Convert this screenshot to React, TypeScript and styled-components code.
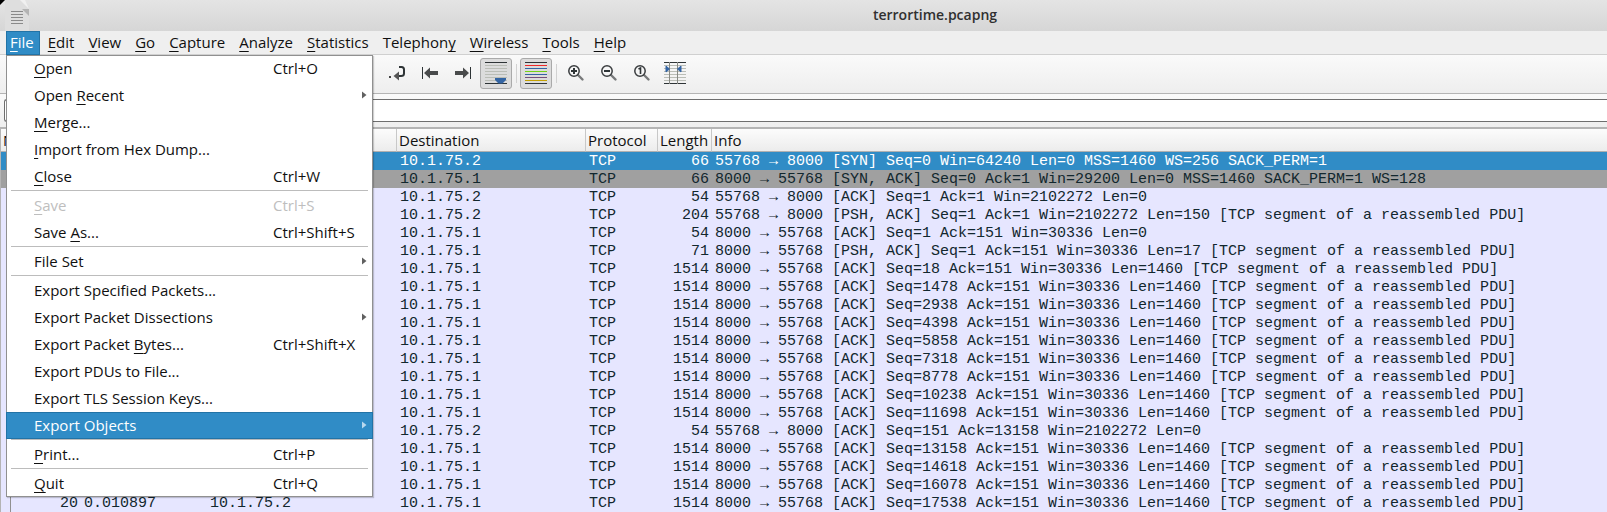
import React from "react";
import styled, { createGlobalStyle, css } from "styled-components";

const ui = `"Open Sans", "Noto Sans", sans-serif`;
const mono = `"Liberation Mono", monospace`;

const Global = createGlobalStyle`
  *, *::before, *::after { box-sizing: border-box; }
  body { margin: 0; background: #e6e6ff; overflow: hidden; }
  button, input { font: inherit; color: inherit; }
`;

const Window = styled.div`
  display: flex;
  flex-direction: column;
  min-height: 100vh;
  background: #efefef;
  color: #101010;
  font: 15px/22px ${ui};
`;

const TitleBar = styled.header`
  position: relative;
  display: flex;
  align-items: center;
  justify-content: center;
  height: 31px;
  padding: 0 0 2px 263px;
  background: linear-gradient(#e4e4e4, #d6d6d6);
  color: #303030;
`;

const Title = styled.h1`
  margin: 0;
  font: 600 14px/20px ${ui};
`;

const DocumentIcon = styled.svg`
  position: absolute;
  left: 0;
  top: 0;
`;

const MenuBar = styled.nav`
  position: relative;
  z-index: 2;
  display: flex;
  height: 24px;
  padding: 0 6px;
  border-bottom: 1px solid #d0d0d0;
`;

const MenuSlot = styled.div`
  position: relative;
`;

const MenuButton = styled.button<{ $open?: boolean }>`
  height: 24px;
  padding: 0 6px 2px 4px;
  margin-right: 4px;
  border: 0;
  background: none;
  line-height: 22px;
  white-space: nowrap;
  ${(p) =>
    p.$open &&
    css`
      background: #308cc6;
      box-shadow: inset 0 0 0 1px #2273a6;
      color: #fff;
    `}
`;

const Mnemonic = styled.span`
  text-decoration: underline;
  text-decoration-thickness: 1px;
  text-underline-offset: 3px;
  text-decoration-skip-ink: none;
`;

const Menu = styled.ul`
  position: absolute;
  left: 0;
  top: 24px;
  width: 367px;
  margin: 0;
  padding: 0;
  list-style: none;
  background: #fff;
  box-shadow: inset 0 0 0 1px #909090, 1px 1px 1px #00000030;
`;

const MenuDivider = styled.li`
  height: 2px;
  margin: 0 5px;
  border-top: 1px solid #bcbcbc;
`;

const MenuItem = styled.button<{ $active?: boolean }>`
  display: grid;
  grid-template-columns: 239px 1fr 5px;
  align-items: center;
  width: 100%;
  height: 27px;
  padding: 0 6px 2px 28px;
  border: 0;
  background: none;
  text-align: left;
  white-space: nowrap;
  &:disabled { color: #bebebe; }
  ${(p) =>
    p.$active &&
    css`
      background: #308cc6;
      box-shadow: inset 0 0 0 1px #2273a6;
      color: #fff;
    `}
`;

const SubmenuArrow = styled.svg`
  grid-column: 3;
`;

const ToolBar = styled.div`
  display: flex;
  align-items: center;
  height: 39px;
  padding: 0 0 2px 381px;
  border-bottom: 1px solid #b4b4b4;
  background: linear-gradient(#fafafa, #eeeeee);
`;

const Tool = styled.button<{ $pressed?: boolean }>`
  display: grid;
  place-items: center;
  width: 32px;
  height: 31px;
  margin-right: 1px;
  padding: 0;
  border: 1px solid ${(p) => (p.$pressed ? "#aaaaaa" : "transparent")};
  border-radius: 3px;
  background: ${(p) => (p.$pressed ? "#dcdcdc" : "none")};
`;

const ToolDivider = styled.span`
  width: 1px;
  height: 19px;
  margin: 0 3px;
  background: #d2d2d2;
`;

const FilterBar = styled.div`
  display: flex;
  height: 33px;
  padding: 5px 0 5px 4px;
  background: linear-gradient(#fafafa, #eeeeee);
`;

const FilterInput = styled.input`
  flex: 1;
  min-width: 0;
  padding: 0 6px;
  border: 1px solid #6e6e6e;
  border-right: 0;
  border-radius: 3px 0 0 3px;
  background: #fff;
  outline: 0;
`;

const PacketPane = styled.main`
  flex: 1;
  border-top: 2px solid #b4b4b4;
  border-left: 1px solid #b4b4b4;
  background: #e6e6ff;
`;

const PacketTable = styled.table`
  width: 100%;
  border-collapse: separate;
  border-spacing: 0;
  table-layout: fixed;
`;

const HeadCell = styled.th`
  height: 23px;
  padding: 0 0 0 2px;
  border-right: 1px solid #c8c8c8;
  border-bottom: 1px solid #b0b0b0;
  background: linear-gradient(#fcfcfc, #ececec);
  font-weight: normal;
  line-height: 22px;
  text-align: left;
  white-space: nowrap;
  &:last-child { border-right: 0; }
`;

type Tone = "selected" | "syn" | "tcp";
const tones = {
  selected: css`background: #308cc6; color: #fff;`,
  syn: css`background: #a0a0a0; color: #12272e;`,
  tcp: css`background: #e6e6ff; color: #12272e;`,
};

const PacketRow = styled.tr<{ $tone: Tone }>`
  ${(p) => tones[p.$tone]}
`;

const Cell = styled.td<{ $right?: boolean }>`
  height: 18px;
  padding: 2px 3px 0;
  overflow: hidden;
  font: 15px/16px ${mono};
  text-align: ${(p) => (p.$right ? "right" : "left")};
  white-space: pre;
`;

const NumberCell = styled(Cell)`
  background: linear-gradient(#909090, #909090) 9px 0 / 1px 100% no-repeat;
`;

type Entry = { label: string; key?: string; sub?: boolean; off?: boolean; active?: boolean } | null;

const fileMenu: Entry[] = [
  { label: "&Open", key: "Ctrl+O" },
  { label: "Open &Recent", sub: true },
  { label: "&Merge..." },
  { label: "&Import from Hex Dump..." },
  { label: "&Close", key: "Ctrl+W" },
  null,
  { label: "&Save", key: "Ctrl+S", off: true },
  { label: "Save &As...", key: "Ctrl+Shift+S" },
  null,
  { label: "File Set", sub: true },
  null,
  { label: "Export Specified Packets..." },
  { label: "Export Packet Dissections", sub: true },
  { label: "Export Packet &Bytes...", key: "Ctrl+Shift+X" },
  { label: "Export PDUs to File..." },
  { label: "Export TLS Session Keys..." },
  { label: "Export Objects", sub: true, active: true },
  null,
  { label: "&Print...", key: "Ctrl+P" },
  null,
  { label: "&Quit", key: "Ctrl+Q" },
];

const menus = ["&File", "&Edit", "&View", "&Go", "&Capture", "&Analyze", "&Statistics", "Telephon&y", "&Wireless", "&Tools", "&Help"];

const A = "10.1.75.1";
const B = "10.1.75.2";
const up = "8000 → 55768 ";
const down = "55768 → 8000 ";
const pdu = " [TCP segment of a reassembled PDU]";

type Packet = { no?: number; time?: string; src?: string; dst: string; length: number; info: string };

const packet = (dst: string, length: number, info: string): Packet => ({ dst, length, info });
const segment = (seq: number) => packet(A, 1514, `${up}[ACK] Seq=${seq} Ack=151 Win=30336 Len=1460${pdu}`);

const packets: Packet[] = [
  packet(B, 66, `${down}[SYN] Seq=0 Win=64240 Len=0 MSS=1460 WS=256 SACK_PERM=1`),
  packet(A, 66, `${up}[SYN, ACK] Seq=0 Ack=1 Win=29200 Len=0 MSS=1460 SACK_PERM=1 WS=128`),
  packet(B, 54, `${down}[ACK] Seq=1 Ack=1 Win=2102272 Len=0`),
  packet(B, 204, `${down}[PSH, ACK] Seq=1 Ack=1 Win=2102272 Len=150${pdu}`),
  packet(A, 54, `${up}[ACK] Seq=1 Ack=151 Win=30336 Len=0`),
  packet(A, 71, `${up}[PSH, ACK] Seq=1 Ack=151 Win=30336 Len=17${pdu}`),
  segment(18),
  segment(1478),
  segment(2938),
  segment(4398),
  segment(5858),
  segment(7318),
  segment(8778),
  segment(10238),
  segment(11698),
  packet(B, 54, `${down}[ACK] Seq=151 Ack=13158 Win=2102272 Len=0`),
  segment(13158),
  segment(14618),
  segment(16078),
  { ...segment(17538), no: 20, time: "0.010897", src: B },
];

function Label({ text }: { text: string }) {
  const i = text.indexOf("&");
  if (i < 0) return <span>{text}</span>;
  return (
    <span>
      {text.slice(0, i)}
      <Mnemonic>{text[i + 1]}</Mnemonic>
      {text.slice(i + 2)}
    </span>
  );
}

function FileMenu() {
  return (
    <Menu>
      {fileMenu.map((e, i) =>
        e === null ? (
          <MenuDivider key={i} />
        ) : (
          <li key={i}>
            <MenuItem $active={e.active} disabled={e.off}>
              <Label text={e.label} />
              {e.key && <span>{e.key}</span>}
              {e.sub && (
                <SubmenuArrow width="5" height="8" viewBox="0 0 5 8">
                  <path d="M0 0.5L4.5 4L0 7.5Z" fill={e.active ? "#b8d8ee" : "#606060"} />
                </SubmenuArrow>
              )}
            </MenuItem>
          </li>
        )
      )}
    </Menu>
  );
}

const Lines = ({ colors }: { colors: string[] }) => (
  <>
    {colors.map((c, i) => (
      <rect key={i} x="0" y={i * 3} width="22" height="1" fill={c} />
    ))}
  </>
);
const pale = "#babdb6";
const ink = "#2e3436";

const Magnifier = ({ children }: { children: React.ReactNode }) => (
  <svg width="18" height="18" viewBox="0 0 18 18" fill="none">
    <path d="M10.5 10.5L15.5 15.5" stroke="#77797a" strokeWidth="2.4" strokeLinecap="round" />
    <circle cx="7" cy="7" r="5.2" fill="#f6f6f6" stroke="#3a3d3f" strokeWidth="1.5" />
    {children}
  </svg>
);

function Tools() {
  return (
    <ToolBar>
      <Tool aria-label="Go to packet">
        <svg width="18" height="18" viewBox="0 0 18 18">
          <rect x="1" y="12" width="2" height="2" fill="#444" />
          <path d="M11 3H13.5Q16 3 16 5.5V9.500Q16 12 13 12H10" fill="none" stroke={ink} strokeWidth="2" />
          <path d="M5.500 12L11 7.500V16.500Z" fill="#555" />
        </svg>
      </Tool>
      <Tool aria-label="First packet">
        <svg width="18" height="14" viewBox="0 0 18 14">
          <rect x="1" y="1" width="1" height="12" fill={ink} />
          <path d="M3 7L9 1.500V5H17V9H9V12.500Z" fill="#494b4c" />
        </svg>
      </Tool>
      <Tool aria-label="Last packet">
        <svg width="18" height="14" viewBox="0 0 18 14">
          <rect x="16" y="1" width="1" height="12" fill={ink} />
          <path d="M15 7L9 1.500V5H1V9H9V12.500Z" fill="#494b4c" />
        </svg>
      </Tool>
      <Tool $pressed aria-label="Auto scroll">
        <svg width="22" height="22" viewBox="0 0 22 22">
          <Lines colors={[ink, pale, pale, pale, pale, pale, pale, ink]} />
          <path d="M10 16H21V18L17.500 21.500H13.500L10 18Z" fill="#3465a4" />
        </svg>
      </Tool>
      <ToolDivider />
      <Tool $pressed aria-label="Colorize packets">
        <svg width="22" height="22" viewBox="0 0 22 22">
          <Lines colors={[ink, "#ef2929", "#3465a4", "#73d216", "#3465a4", "#75507b", "#c4a000", ink]} />
        </svg>
      </Tool>
      <ToolDivider />
      <Tool aria-label="Zoom in">
        <Magnifier><path d="M4 7H10M7 4V10" stroke={ink} strokeWidth="2" /></Magnifier>
      </Tool>
      <Tool aria-label="Zoom out">
        <Magnifier><path d="M4 7H10" stroke={ink} strokeWidth="2" /></Magnifier>
      </Tool>
      <Tool aria-label="Normal size">
        <Magnifier><path d="M5.500 5L7.500 4V10" stroke={ink} strokeWidth="1.600" /></Magnifier>
      </Tool>
      <Tool aria-label="Resize columns">
        <svg width="22" height="22" viewBox="0 0 22 22">
          <Lines colors={[ink, pale, pale, pale, pale, pale, pale, ink]} />
          <rect x="5" y="0" width="1" height="22" fill="#888a85" />
          <rect x="13" y="0" width="1" height="22" fill="#888a85" />
          <path d="M2 4L5.500 7L2 10ZM17 4L13.500 7L17 10Z" fill="#3465a4" stroke="#3465a4" />
        </svg>
      </Tool>
    </ToolBar>
  );
}

export default function App() {
  return (
    <Window>
      <Global />
      <TitleBar>
        <DocumentIcon width="30" height="31" viewBox="0 0 30 31">
          <path d="M0 0H5L0 5Z" fill="#000" />
          <path d="M5 0H22L29 8V31H5Z" fill="#dedede" />
          <path d="M20 0H25L29 9Z" fill="#f0f0f0" />
          <path d="M22 9H29V16Z" fill="#b4b4b4" />
          <path d="M11 11.500H23M11 14.500H23M11 17.500H23M11 20.500H23M11 23.500H23" stroke="#8a8a8a" />
        </DocumentIcon>
        <Title>terrortime.pcapng</Title>
      </TitleBar>
      <MenuBar>
        {menus.map((m, i) => (
          <MenuSlot key={m}>
            <MenuButton $open={i === 0}><Label text={m} /></MenuButton>
            {i === 0 && <FileMenu />}
          </MenuSlot>
        ))}
      </MenuBar>
      <Tools />
      <FilterBar>
        <FilterInput aria-label="Display filter" />
      </FilterBar>
      <PacketPane>
        <PacketTable>
          <colgroup>
            <col width="80" />
            <col width="126" />
            <col width="190" />
            <col width="189" />
            <col width="72" />
            <col width="54" />
            <col />
          </colgroup>
          <thead>
            <tr>
              <HeadCell>No.</HeadCell>
              <HeadCell aria-label="Time" />
              <HeadCell aria-label="Source" />
              <HeadCell>Destination</HeadCell>
              <HeadCell>Protocol</HeadCell>
              <HeadCell>Length</HeadCell>
              <HeadCell>Info</HeadCell>
            </tr>
          </thead>
          <tbody>
            {packets.map((p, i) => (
              <PacketRow key={i} $tone={i === 0 ? "selected" : i === 1 ? "syn" : "tcp"}>
                {i > 1 ? <NumberCell $right>{p.no}</NumberCell> : <Cell $right>{p.no}</Cell>}
                <Cell>{p.time}</Cell>
                <Cell>{p.src}</Cell>
                <Cell>{p.dst}</Cell>
                <Cell>TCP</Cell>
                <Cell $right>{p.length}</Cell>
                <Cell>{p.info}</Cell>
              </PacketRow>
            ))}
          </tbody>
        </PacketTable>
      </PacketPane>
    </Window>
  );
}
